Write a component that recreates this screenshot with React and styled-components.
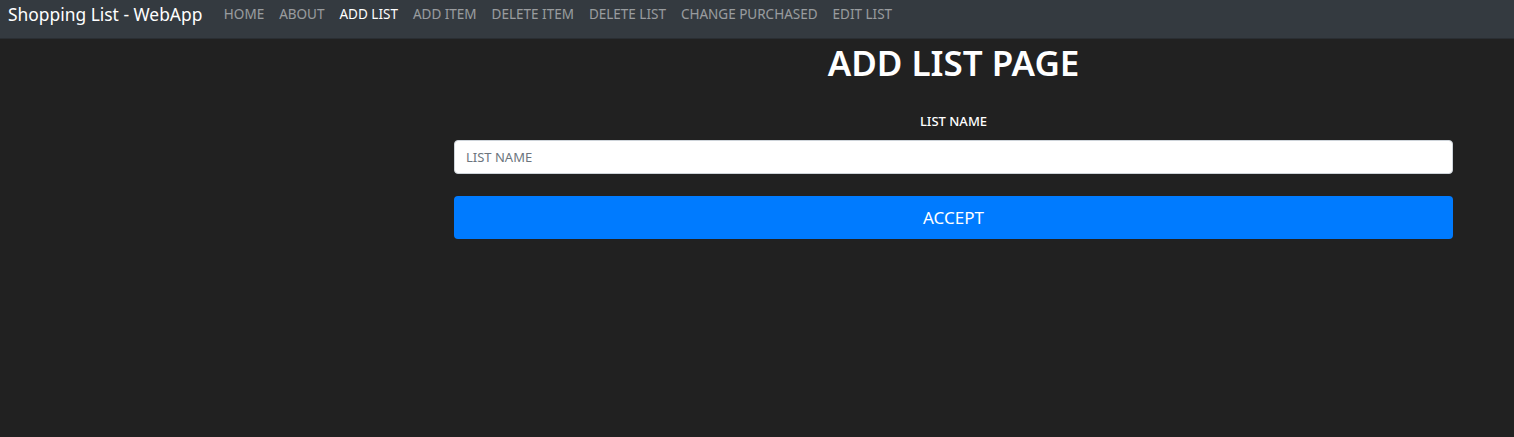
import styled, { createGlobalStyle } from "styled-components";

const GlobalStyle = createGlobalStyle`
  html, body {
    margin: 0;
    padding: 0;
    background-color: #212121;
    font-family: "Noto Sans", "Open Sans", sans-serif;
  }
`;

const links = [
  "HOME",
  "ABOUT",
  "ADD LIST",
  "ADD ITEM",
  "DELETE ITEM",
  "DELETE LIST",
  "CHANGE PURCHASED",
  "EDIT LIST",
];

export default function App() {
  return (
    <>
      <GlobalStyle />
      <PageContainer>
        <Navbar>
          <Brand>Shopping List - WebApp</Brand>
          <NavList>
            {links.map((link) => (
              <NavLink key={link} $active={link === "ADD LIST"}>
                {link}
              </NavLink>
            ))}
          </NavList>
        </Navbar>

        <Content>
          <FormColumn>
            <Title>ADD LIST PAGE</Title>
            <Label htmlFor="listName">LIST NAME</Label>
            <Input id="listName" placeholder="LIST NAME" />
            <AcceptButton>ACCEPT</AcceptButton>
          </FormColumn>
        </Content>
      </PageContainer>
    </>
  );
}

const PageContainer = styled.div`
  min-height: 437px;
  display: flex;
  flex-direction: column;
  background-color: #212121;
`;

const Navbar = styled.nav`
  height: 39px;
  display: flex;
  align-items: flex-start;
  padding: 3px 8px 0;
  box-sizing: border-box;
  background-color: #343a40;
  border-bottom: 1px solid #2a2e33;
`;

const Brand = styled.span`
  color: #ffffff;
  font-size: 17.4px;
  line-height: 22px;
  margin-right: 14px;
  white-space: nowrap;
`;

const NavList = styled.div`
  display: flex;
  align-items: center;
  height: 22px;
`;

const NavLink = styled.a`
  color: ${({ $active }) => ($active ? "#ffffff" : "rgba(255, 255, 255, 0.5)")};
  font-size: 13.5px;
  padding: 0 7.5px;
  white-space: nowrap;
  cursor: pointer;
  text-decoration: none;
`;

const Content = styled.main`
  display: flex;
  padding: 0 61px 0 454px;
`;

const FormColumn = styled.div`
  flex: 1;
  display: flex;
  flex-direction: column;
  align-items: center;
`;

const Title = styled.h1`
  color: #ffffff;
  font-size: 35px;
  font-weight: 600;
  margin: 1px 0 0;
  line-height: 46px;
`;

const Label = styled.label`
  color: #ffffff;
  font-size: 13px;
  font-weight: 500;
  margin-top: 25px;
  line-height: 20px;
`;

const Input = styled.input`
  width: 100%;
  height: 34px;
  box-sizing: border-box;
  margin-top: 9px;
  padding: 0 11px;
  border: 1px solid #ced4da;
  border-radius: 4px;
  font-family: inherit;
  font-size: 13px;
  color: #495057;
  background: #ffffff;

  &::placeholder {
    color: #6c757d;
  }
`;

const AcceptButton = styled.button`
  width: 100%;
  height: 43px;
  margin-top: 22px;
  border: none;
  border-radius: 4px;
  background-color: #007bff;
  color: #ffffff;
  font-family: inherit;
  font-size: 17px;
  cursor: pointer;
`;
